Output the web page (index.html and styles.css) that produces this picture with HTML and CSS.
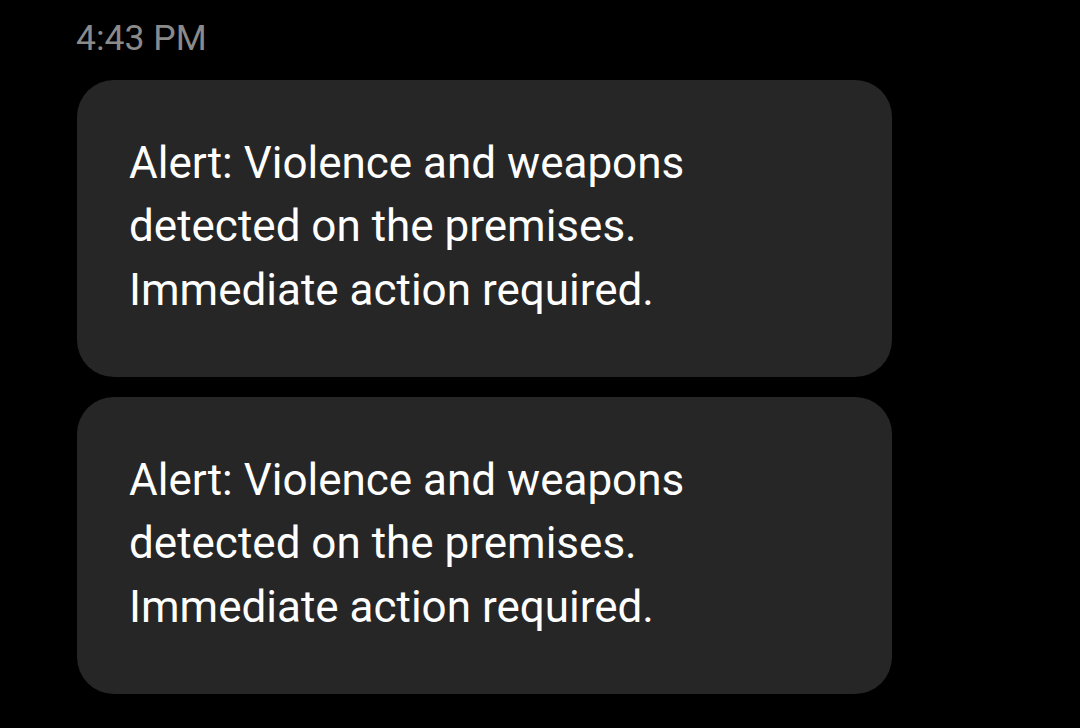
FILE: index.html
```html
<!DOCTYPE html>
<html>
<head>
<meta charset="utf-8">
<link rel="stylesheet" href="styles.css">
</head>
<body>
<div class="thread">
  <div class="time">4:43 PM</div>
  <div class="bubble">Alert: Violence and weapons detected on the premises. Immediate action required.</div>
  <div class="bubble">Alert: Violence and weapons detected on the premises. Immediate action required.</div>
</div>
</body>
</html>
```
FILE: styles.css
```css
html, body {
  margin: 0;
  background: #000;
  height: 100%;
}
.thread {
  display: flex;
  flex-direction: column;
  align-items: flex-start;
  padding: 18px 0 0 77px;
  font-family: Roboto, "Noto Sans", sans-serif;
}
.time {
  color: #8a8a8a;
  font-size: 35.5px;
  line-height: 40px;
  margin-left: -1px;
  margin-bottom: 22px;
}
.bubble {
  box-sizing: border-box;
  width: 815px;
  background: #262626;
  border-radius: 37px;
  color: #fff;
  font-size: 44px;
  line-height: 63.5px;
  padding: 51.5px 120px 55px 52px;
  margin-bottom: 20px;
}
```
